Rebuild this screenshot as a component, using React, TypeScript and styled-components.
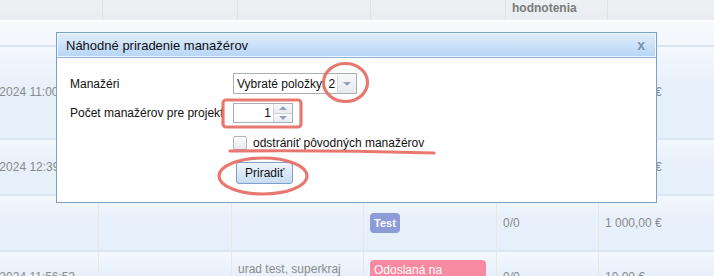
import React from "react";
import styled, { createGlobalStyle } from "styled-components";

const GlobalStyle = createGlobalStyle`
  html, body {
    margin: 0;
    padding: 0;
  }
  body {
    background: #e7f0fa;
    font-family: "Liberation Sans", Arial, sans-serif;
    overflow: hidden;
  }
`;

const Page = styled.div`
  position: relative;
  width: 714px;
  height: 276px;
  overflow: hidden;
  background: #e7f0fa;
`;

// podkladova tabulka
const Table = styled.div`
  margin-left: -40px;
  width: 800px;
  font-size: 12px;
  color: #8a8a8a;
`;

const HeadRow = styled.div`
  display: grid;
  grid-template-columns: 142px 135px 133px 135px 102px 1fr;
  height: 52px;
  margin-top: -32px;
  background: linear-gradient(#f4f6f8, #e9edf1);
  border-bottom: 2px solid #fff;
`;

const HeadCell = styled.div`
  display: flex;
  align-items: center;
  padding: 0 6px 1px;
  border-left: 1px solid #e6e1da;
  font-weight: bold;
  color: #7b7b7b;
  line-height: 15px;
  &:first-child {
    border-left: none;
  }
`;

const FilterStrip = styled.div`
  height: 23px;
  background: linear-gradient(#f7fafd, #f2f7fc);
`;

const Row = styled.div<{ $h: number }>`
  display: grid;
  grid-template-columns: 138px 133px 132px 133px 102px 1fr;
  height: ${(p) => p.$h}px;
  box-sizing: border-box;
  border-top: 2px solid #dbe6f1;
  background: linear-gradient(#f4f8fd, #e8f1fb 40%, #e6f0fa);
`;

const Cell = styled.div`
  display: flex;
  align-items: center;
  padding: 0 6px;
  border-left: 1px solid #ebe6df;
  line-height: 15px;
  white-space: nowrap;
  &:first-child {
    border-left: none;
  }
`;

const Badge = styled.span<{ $bg: string; $width?: number; $bold?: boolean }>`
  display: inline-block;
  box-sizing: border-box;
  width: ${(p) => (p.$width ? `${p.$width}px` : "auto")};
  padding: 3px 4px;
  border-radius: 4px;
  background: ${(p) => p.$bg};
  color: #fff;
  font-size: ${(p) => (p.$bold ? 11 : 12)}px;
  font-weight: ${(p) => (p.$bold ? "bold" : "normal")};
  line-height: 14px;
  white-space: normal;
`;

// dialog
const Dialog = styled.div`
  position: absolute;
  left: 56px;
  top: 32px;
  width: 601px;
  height: 171px;
  box-sizing: border-box;
  border: 1px solid #7c9fc5;
  background: #fff;
  display: flex;
  flex-direction: column;
  color: #111;
`;

const TitleBar = styled.div`
  height: 25px;
  box-sizing: border-box;
  display: flex;
  align-items: center;
  justify-content: space-between;
  padding: 0 11px 0 9px;
  background: linear-gradient(#e0edfc, #b6d5f6);
  border-bottom: 1px solid #8fb2d8;
  box-shadow: inset 0 0 0 1px #eef6fe;
  font-size: 13px;
`;

const Close = styled.span`
  font-size: 14px;
  font-weight: bold;
  color: #7d92a9;
  line-height: 14px;
`;

const Body = styled.div`
  display: flex;
  flex-direction: column;
  padding: 15px 13px 0;
  font-size: 12px;
`;

const FormRow = styled.div<{ $gap?: number }>`
  display: flex;
  align-items: center;
  margin-top: ${(p) => p.$gap || 0}px;
`;

const Label = styled.div`
  width: 163px;
  flex-shrink: 0;
  white-space: nowrap;
`;

const Select = styled.div`
  width: 124px;
  height: 21px;
  box-sizing: border-box;
  border: 1px solid #a9b0b8;
  display: flex;
  align-items: center;
  background: #fff;
`;

const SelectText = styled.span`
  flex: 1;
  padding-left: 3px;
  white-space: nowrap;
`;

const SelectButton = styled.span`
  width: 18px;
  flex-shrink: 0;
  align-self: stretch;
  border-left: 1px solid #d6dade;
  background: linear-gradient(#f9fafb, #e7eaed);
  display: flex;
  align-items: center;
  justify-content: center;
`;

const Arrow = styled.span<{ $up?: boolean }>`
  width: 0;
  height: 0;
  border-left: 4px solid transparent;
  border-right: 4px solid transparent;
  ${(p) =>
    p.$up
      ? "border-bottom: 4px solid #90a3b9;"
      : "border-top: 4px solid #90a3b9;"}
`;

const NumberBox = styled.div`
  position: relative;
  width: 60px;
  height: 20px;
  box-sizing: border-box;
  border: 1px solid #a9b0b8;
  background: #fff;
  display: flex;
`;

const NumberValue = styled.span`
  flex: 1;
  text-align: right;
  padding-right: 2px;
  line-height: 18px;
`;

const Spinner = styled.span`
  width: 18px;
  display: flex;
  flex-direction: column;
  border-left: 1px solid #cdd3d9;
`;

const SpinHalf = styled.span`
  flex: 1;
  display: flex;
  align-items: center;
  justify-content: center;
  background: linear-gradient(#f8f9fa, #e9ecef);
  & + & {
    border-top: 1px solid #cdd3d9;
  }
`;

const CheckLine = styled.label`
  display: flex;
  align-items: center;
  gap: 6px;
`;

const CheckBox = styled.span`
  width: 14px;
  height: 14px;
  box-sizing: border-box;
  border: 1px solid #b2b6bb;
  border-radius: 2px;
  background: linear-gradient(#ffffff, #e6e8ea);
`;

const Button = styled.button`
  margin-left: 3px;
  height: 22px;
  padding: 0 8px;
  border: 1px solid #7fa1c8;
  border-radius: 3px;
  background: linear-gradient(#edf5fd, #c6dcf4);
  font-family: inherit;
  font-size: 12px;
  color: #111;
`;

const Marks = styled.svg`
  position: absolute;
  left: 0;
  top: 0;
  pointer-events: none;
`;

const App = () => {
  return (
    <Page>
      <GlobalStyle />
      <Table>
        <HeadRow>
          <HeadCell>Dátum</HeadCell>
          <HeadCell>Žiadateľ</HeadCell>
          <HeadCell>Manažéri</HeadCell>
          <HeadCell>Typ</HeadCell>
          <HeadCell>
            Priemer
            <br />
            počet
            <br />
            hodnotenia
          </HeadCell>
          <HeadCell>Suma</HeadCell>
        </HeadRow>
        <FilterStrip />
        <Row $h={93}>
          <Cell>14.05.2024 11:00:46</Cell>
          <Cell />
          <Cell />
          <Cell />
          <Cell>0/0</Cell>
          <Cell>1 000,00 €</Cell>
        </Row>
        <Row $h={56}>
          <Cell>14.05.2024 12:39:05</Cell>
          <Cell />
          <Cell />
          <Cell />
          <Cell>0/0</Cell>
          <Cell>1 000,00 €</Cell>
        </Row>
        <Row $h={56}>
          <Cell />
          <Cell />
          <Cell />
          <Cell>
            <Badge $bg="#8e9bd9" $bold>
              Test
            </Badge>
          </Cell>
          <Cell>0/0</Cell>
          <Cell>1 000,00 €</Cell>
        </Row>
        <Row $h={52}>
          <Cell>21.05.2024 11:56:53</Cell>
          <Cell />
          <Cell>
            urad test, superkraj
            <br />
            test
          </Cell>
          <Cell>
            <Badge $bg="#f78aa0" $width={116}>
              Odoslaná na schválenie
            </Badge>
          </Cell>
          <Cell>0/0</Cell>
          <Cell>10,00 €</Cell>
        </Row>
      </Table>

      <Dialog>
        <TitleBar>
          <span>Náhodné priradenie manažérov</span>
          <Close>x</Close>
        </TitleBar>
        <Body>
          <FormRow>
            <Label>Manažéri</Label>
            <Select>
              <SelectText>Vybraté položky: 2</SelectText>
              <SelectButton>
                <Arrow />
              </SelectButton>
            </Select>
          </FormRow>
          <FormRow $gap={9}>
            <Label>Počet manažérov pre projekt</Label>
            <NumberBox>
              <NumberValue>1</NumberValue>
              <Spinner>
                <SpinHalf>
                  <Arrow $up />
                </SpinHalf>
                <SpinHalf>
                  <Arrow />
                </SpinHalf>
              </Spinner>
            </NumberBox>
          </FormRow>
          <FormRow $gap={13}>
            <Label />
            <CheckLine>
              <CheckBox />
              odstrániť pôvodných manažérov
            </CheckLine>
          </FormRow>
          <FormRow $gap={12}>
            <Label />
            <Button>Priradiť</Button>
          </FormRow>
        </Body>
      </Dialog>

      <Marks width="714" height="276" viewBox="0 0 714 276">
        <defs>
          <filter id="soft" x="-10%" y="-10%" width="120%" height="120%">
            <feGaussianBlur stdDeviation="0.6" />
          </filter>
        </defs>
        <g
          fill="none"
          stroke="#e66b61"
          strokeWidth="3.2"
          strokeLinecap="round"
          opacity="0.9"
          filter="url(#soft)"
        >
          <ellipse cx="345.5" cy="82.5" rx="22" ry="19" />
          <rect x="223" y="100" width="78" height="27" rx="3" />
          <path d="M230 151 Q 330 150 434 153" />
          <ellipse cx="263" cy="176" rx="44" ry="18" />
        </g>
      </Marks>
    </Page>
  );
};

export default App;
